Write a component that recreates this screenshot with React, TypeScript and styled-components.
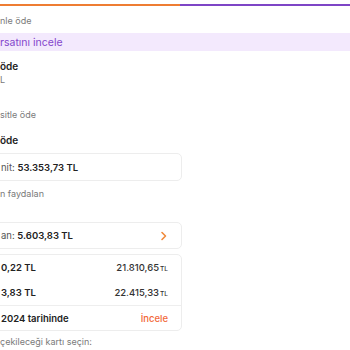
import React from "react";
import styled, { createGlobalStyle } from "styled-components";

const GlobalStyle = createGlobalStyle`
    html, body {
        margin: 0;
        padding: 0;
        background: #ffffff;
        overflow: hidden;
    }
    body {
        font-family: Inter, "Noto Sans", "Liberation Sans", sans-serif;
        color: #222222;
    }
`;

const Page = styled.div`
    display: flex;
    flex-direction: column;
    width: 362px;
    margin-left: -12px;
`;

const Progress = styled.div`
    display: flex;
    height: 2px;
    margin-top: 4px;
`;

const ProgressPart = styled.div<{ $color: string; $grow: number }>`
    flex: ${p => p.$grow} 0 0;
    background-color: ${p => p.$color};
`;

const Column = styled.div`
    display: flex;
    flex-direction: column;
    width: 194px;
`;

const Muted = styled.div<{ $top?: number }>`
    margin-top: ${p => p.$top ?? 0}px;
    padding-left: 12px;
    font-size: 9px;
    line-height: 12px;
    color: #7a7a7a;
    white-space: nowrap;
`;

const Title = styled.div<{ $top?: number }>`
    margin-top: ${p => p.$top ?? 0}px;
    padding-left: 12px;
    font-size: 10px;
    line-height: 13px;
    font-weight: 600;
    color: #222222;
    white-space: nowrap;
`;

const Banner = styled.div`
    display: flex;
    align-items: center;
    height: 18px;
    margin-top: 6px;
    padding-left: 12px;
    background-color: #f3e9fd;
    color: #8446cc;
    font-size: 10.5px;
`;

const Card = styled.div<{ $top?: number }>`
    display: flex;
    flex-direction: column;
    margin-top: ${p => p.$top ?? 0}px;
    border: 1px solid #ededed;
    border-radius: 5px;
    background: #ffffff;
`;

const Row = styled.div<{ $height?: number; $divider?: boolean }>`
    display: flex;
    align-items: center;
    justify-content: space-between;
    height: ${p => p.$height ?? 26}px;
    padding: 0 13px 0 12px;
    font-size: 9.5px;
    white-space: nowrap;
    ${p => p.$divider && "border-top: 1px solid #eeeeee;"}
`;

const Label = styled.span`
    color: #555555;
`;

const Strong = styled.span`
    font-weight: 600;
    color: #222222;
`;

const Amount = styled.span`
    font-weight: 500;
    color: #333333;
`;

const Unit = styled.span`
    font-size: 6.5px;
    margin-left: 1px;
`;

const Link = styled.span`
    color: #f2693a;
    font-weight: 500;
`;

const Chevron = () => (
    <svg width="8" height="10" viewBox="0 0 8 10">
        <path d="M2 1.5 L5.5 5 L2 8.5" fill="none" stroke="#f08a3c" strokeWidth="1.6" strokeLinecap="round" strokeLinejoin="round" />
    </svg>
);

export default function App() {
    return (
        <>
            <GlobalStyle />
            <Page>
                <Progress>
                    <ProgressPart $color="#ee7d33" $grow={192} />
                    <ProgressPart $color="#7e45c6" $grow={170} />
                </Progress>
                <Column>
                    <Muted $top={9}>nle öde</Muted>
                </Column>
                <Banner>rsatını incele</Banner>
                <Column>
                    <Title $top={9}>öde</Title>
                    <Muted $top={1}>L</Muted>
                    <Muted $top={23}>sitle öde</Muted>
                    <Title $top={13}>öde</Title>
                    <Card $top={6}>
                        <Row $height={26}>
                            <span>
                                <Label>nit: </Label>
                                <Strong>53.353,73 TL</Strong>
                            </span>
                        </Row>
                    </Card>
                    <Muted $top={7}>n faydalan</Muted>
                    <Card $top={22}>
                        <Row $height={25}>
                            <span>
                                <Label>an: </Label>
                                <Strong>5.603,83 TL</Strong>
                            </span>
                            <Chevron />
                        </Row>
                    </Card>
                    <Card $top={5}>
                        <Row $height={25}>
                            <Strong>0,22 TL</Strong>
                            <Amount>
                                21.810,65<Unit>TL</Unit>
                            </Amount>
                        </Row>
                        <Row $height={25}>
                            <Strong>3,83 TL</Strong>
                            <Amount>
                                22.415,33<Unit>TL</Unit>
                            </Amount>
                        </Row>
                        <Row $height={24} $divider>
                            <Strong>2024 tarihinde</Strong>
                            <Link>İncele</Link>
                        </Row>
                    </Card>
                    <Muted $top={5}>çekileceği kartı seçin:</Muted>
                </Column>
            </Page>
        </>
    );
}
